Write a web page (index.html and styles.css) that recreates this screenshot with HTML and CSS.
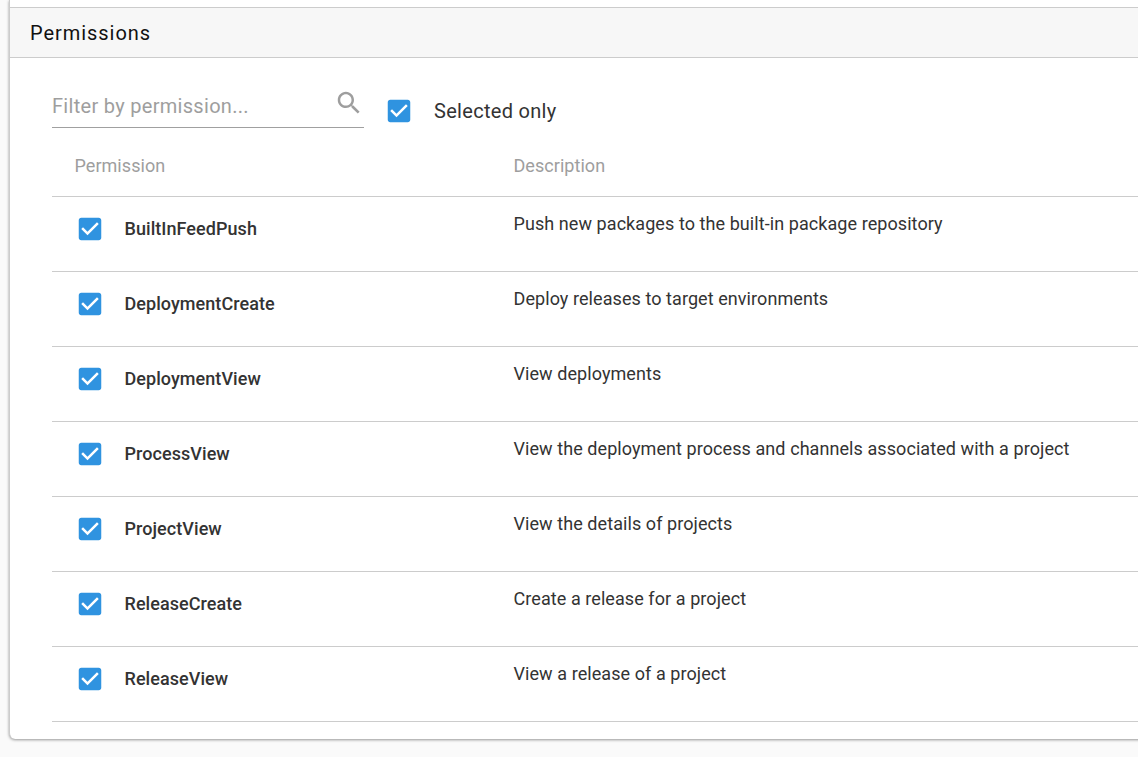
FILE: index.html
```html
<!DOCTYPE html>
<html lang="en">
<head>
<meta charset="utf-8">
<title>Permissions</title>
<link rel="stylesheet" href="styles.css">
</head>
<body>
<svg class="defs" width="0" height="0"><symbol id="checked" viewBox="0 0 24 24"><path d="M19 3H5c-1.11 0-2 .9-2 2v14c0 1.1.89 2 2 2h14c1.11 0 2-.9 2-2V5c0-1.1-.89-2-2-2zm-9 14l-5-5 1.41-1.41L10 14.17l7.59-7.59L19 8l-9 9z"/></symbol></svg>
<main class="card">
  <div class="previous"></div>
  <h2 class="heading">Permissions</h2>
  <section class="content">
    <div class="filters">
      <label class="search"><span>Filter by permission...</span>
        <svg viewBox="0 0 24 24"><path d="M15.5 14h-.79l-.28-.27C15.41 12.59 16 11.11 16 9.5 16 5.91 13.09 3 9.5 3S3 5.91 3 9.5 5.91 16 9.5 16c1.61 0 3.09-.59 4.23-1.57l.27.28v.79l5 4.99L20.49 19l-4.99-5zm-6 0C7.01 14 5 11.99 5 9.5S7.01 5 9.5 5 14 7.01 14 9.5 11.99 14 9.5 14z"/></svg>
      </label>
      <div class="selected"><svg class="check"><use href="#checked"/></svg><span>Selected only</span></div>
    </div>
    <div class="row head"><span class="col">Permission</span><span>Description</span></div>
    <div class="row"><div class="name"><svg class="check"><use href="#checked"/></svg><span>BuiltInFeedPush</span></div><p>Push new packages to the built-in package repository</p></div>
    <div class="row"><div class="name"><svg class="check"><use href="#checked"/></svg><span>DeploymentCreate</span></div><p>Deploy releases to target environments</p></div>
    <div class="row"><div class="name"><svg class="check"><use href="#checked"/></svg><span>DeploymentView</span></div><p>View deployments</p></div>
    <div class="row"><div class="name"><svg class="check"><use href="#checked"/></svg><span>ProcessView</span></div><p>View the deployment process and channels associated with a project</p></div>
    <div class="row"><div class="name"><svg class="check"><use href="#checked"/></svg><span>ProjectView</span></div><p>View the details of projects</p></div>
    <div class="row"><div class="name"><svg class="check"><use href="#checked"/></svg><span>ReleaseCreate</span></div><p>Create a release for a project</p></div>
    <div class="row"><div class="name"><svg class="check"><use href="#checked"/></svg><span>ReleaseView</span></div><p>View a release of a project</p></div>
  </section>
</main>
</body>
</html>
```
FILE: styles.css
```css
* { box-sizing: border-box; }
body { margin: 0; height: 757px; overflow: hidden; background: #fafafa; color: #333; font: 18px/24px Roboto, sans-serif; }
.defs { display: block; height: 0; }
.card { width: 1150px; height: 739px; margin-left: 9px; background: #fff; border-left: 1px solid #ccc; border-radius: 0 0 0 6px; box-shadow: 0 1px 3px rgba(0,0,0,.4); }
.previous { height: 7px; }
.heading { height: 51px; margin: 0; padding: 0 20px; display: flex; align-items: center; background: #f7f7f7; border-top: 1px solid #ccc; border-bottom: 1px solid #ccc; color: #111; font-size: 20px; font-weight: 400; letter-spacing: .95px; }
.content { padding: 25px 0 0 42px; }
.filters { display: flex; height: 52px; }
.search { width: 312px; height: 45px; border-bottom: 1px solid #a0a0a0; display: flex; justify-content: space-between; color: #9e9e9e; font-size: 20px; letter-spacing: .3px; padding-top: 11px; }
.search svg { width: 30px; height: 30px; fill: #9e9e9e; margin-top: -6px; }
.selected { display: flex; align-items: center; gap: 20px; height: 56px; margin-left: 20px; font-size: 20px; letter-spacing: .3px; }
.check { width: 30px; height: 30px; fill: #2f93e0; flex-shrink: 0; }
.row { display: flex; height: 75px; border-bottom: 1px solid #ccc; padding-top: 15px; }
.row.head { height: 62px; padding: 19px 0 0 22.5px; color: #9e9e9e; letter-spacing: .05px; }
.col { width: 439px; }
.name { width: 461.5px; height: 34px; padding-left: 23px; display: flex; align-items: center; gap: 19.5px; font-weight: 500; letter-spacing: .06px; }
.row p { margin: 0; letter-spacing: .073px; }
```
